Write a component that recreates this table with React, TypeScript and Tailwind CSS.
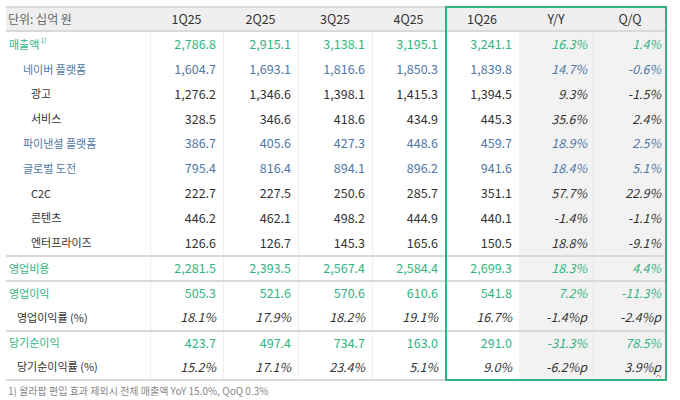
import React from "react";

type Kind = "green" | "blue" | "plain" | "rate";

type Row = {
  label: string;
  indent: string;
  kind: Kind;
  values: string[];
  sep?: boolean;
  sup?: boolean;
};

const rows: Row[] = [
  { label: "매출액", indent: "pl-[3px]", kind: "green", sup: true, values: ["2,786.8", "2,915.1", "3,138.1", "3,195.1", "3,241.1", "16.3%", "1.4%"] },
  { label: "네이버 플랫폼", indent: "pl-[17px]", kind: "blue", values: ["1,604.7", "1,693.1", "1,816.6", "1,850.3", "1,839.8", "14.7%", "-0.6%"] },
  { label: "광고", indent: "pl-[25px]", kind: "plain", values: ["1,276.2", "1,346.6", "1,398.1", "1,415.3", "1,394.5", "9.3%", "-1.5%"] },
  { label: "서비스", indent: "pl-[25px]", kind: "plain", values: ["328.5", "346.6", "418.6", "434.9", "445.3", "35.6%", "2.4%"] },
  { label: "파이낸셜 플랫폼", indent: "pl-[17px]", kind: "blue", values: ["386.7", "405.6", "427.3", "448.6", "459.7", "18.9%", "2.5%"] },
  { label: "글로벌 도전", indent: "pl-[17px]", kind: "blue", values: ["795.4", "816.4", "894.1", "896.2", "941.6", "18.4%", "5.1%"] },
  { label: "C2C", indent: "pl-[25px]", kind: "plain", values: ["222.7", "227.5", "250.6", "285.7", "351.1", "57.7%", "22.9%"] },
  { label: "콘텐츠", indent: "pl-[25px]", kind: "plain", values: ["446.2", "462.1", "498.2", "444.9", "440.1", "-1.4%", "-1.1%"] },
  { label: "엔터프라이즈", indent: "pl-[25px]", kind: "plain", values: ["126.6", "126.7", "145.3", "165.6", "150.5", "18.8%", "-9.1%"] },
  { label: "영업비용", indent: "pl-[3px]", kind: "green", sep: true, values: ["2,281.5", "2,393.5", "2,567.4", "2,584.4", "2,699.3", "18.3%", "4.4%"] },
  { label: "영업이익", indent: "pl-[3px]", kind: "green", sep: true, values: ["505.3", "521.6", "570.6", "610.6", "541.8", "7.2%", "-11.3%"] },
  { label: "영업이익률 (%)", indent: "pl-[11px]", kind: "rate", values: ["18.1%", "17.9%", "18.2%", "19.1%", "16.7%", "-1.4%p", "-2.4%p"] },
  { label: "당기순이익", indent: "pl-[3px]", kind: "green", sep: true, values: ["423.7", "497.4", "734.7", "163.0", "291.0", "-31.3%", "78.5%"] },
  { label: "당기순이익률 (%)", indent: "pl-[11px]", kind: "rate", values: ["15.2%", "17.1%", "23.4%", "5.1%", "9.0%", "-6.2%p", "3.9%p"] },
];

const widths = ["w-[73px]", "w-[75px]", "w-[74px]", "w-[73px]", "w-[74px]", "w-[74px]", "w-[74px]"];
const heads = ["1Q25", "2Q25", "3Q25", "4Q25", "1Q26", "Y/Y", "Q/Q"];

const textColor: Record<Kind, string> = {
  green: "text-[#2fb57f]",
  blue: "text-[#4f77a6]",
  plain: "text-[#333333]",
  rate: "text-[#333333]",
};

const cellBorder = ["border-l border-[#eeeeee]", "border-l border-[#eeeeee]", "border-l border-[#eeeeee]", "border-l border-[#eeeeee]", "", "", "border-l border-[#e6e6e6]"];

function Value({ v }: { v: string }) {
  if (v === "3.9%p") {
    return (
      <span>
        3.9%
        <span className="underline decoration-wavy decoration-[#f06a6a] decoration-1 underline-offset-2">p</span>
      </span>
    );
  }
  return <span>{v}</span>;
}

export default function App() {
  return (
    <div className="w-[680px] h-[400px] bg-white pt-[6px] pl-[6px] font-['Noto_Sans_CJK_KR',sans-serif] text-[12.5px] leading-none">
      <div className="relative w-[661px]">
        <div className="flex h-[26px] items-center bg-[#efefef] border-t-2 border-b-2 border-[#d9d9d9] text-[#333333]">
          <div className="w-[144px] pl-[2px] text-[12px] text-[#666666]">단위: 십억 원</div>
          {heads.map((h, i) => (
            <div key={h} className={`${widths[i]} text-center`}>
              {h}
            </div>
          ))}
        </div>
        {rows.map((r) => (
          <div key={r.label} className={`flex h-[24.8px] ${r.sep ? "border-t-2 border-[#d9d9d9]" : ""} ${textColor[r.kind]}`}>
            <div className={`w-[144px] flex items-center text-[11px] ${r.indent}`}>
              {r.label}
              {r.sup && <sup className="text-[7px] ml-[1px] -mt-[2px]">1)</sup>}
            </div>
            {r.values.map((v, i) => (
              <div
                key={i}
                className={`${widths[i]} flex items-center justify-end ${i >= 5 ? "bg-[#f2f2f2] pr-[6px]" : "pr-[7px]"} ${cellBorder[i]} ${i >= 5 || r.kind === "rate" ? "italic" : ""}`}
              >
                <Value v={v} />
              </div>
            ))}
          </div>
        ))}
        <div className="border-t-2 border-[#d9d9d9]" />
        <div className="absolute left-[439px] top-0 bottom-0 w-[222px] border-2 border-[#33b27d] pointer-events-none" />
      </div>
      <div className="mt-[5px] pl-[2px] text-[10px] text-[#888888]">1) 왈라팝 편입 효과 제외시 전체 매출액 YoY 15.0%, QoQ 0.3%</div>
    </div>
  );
}
